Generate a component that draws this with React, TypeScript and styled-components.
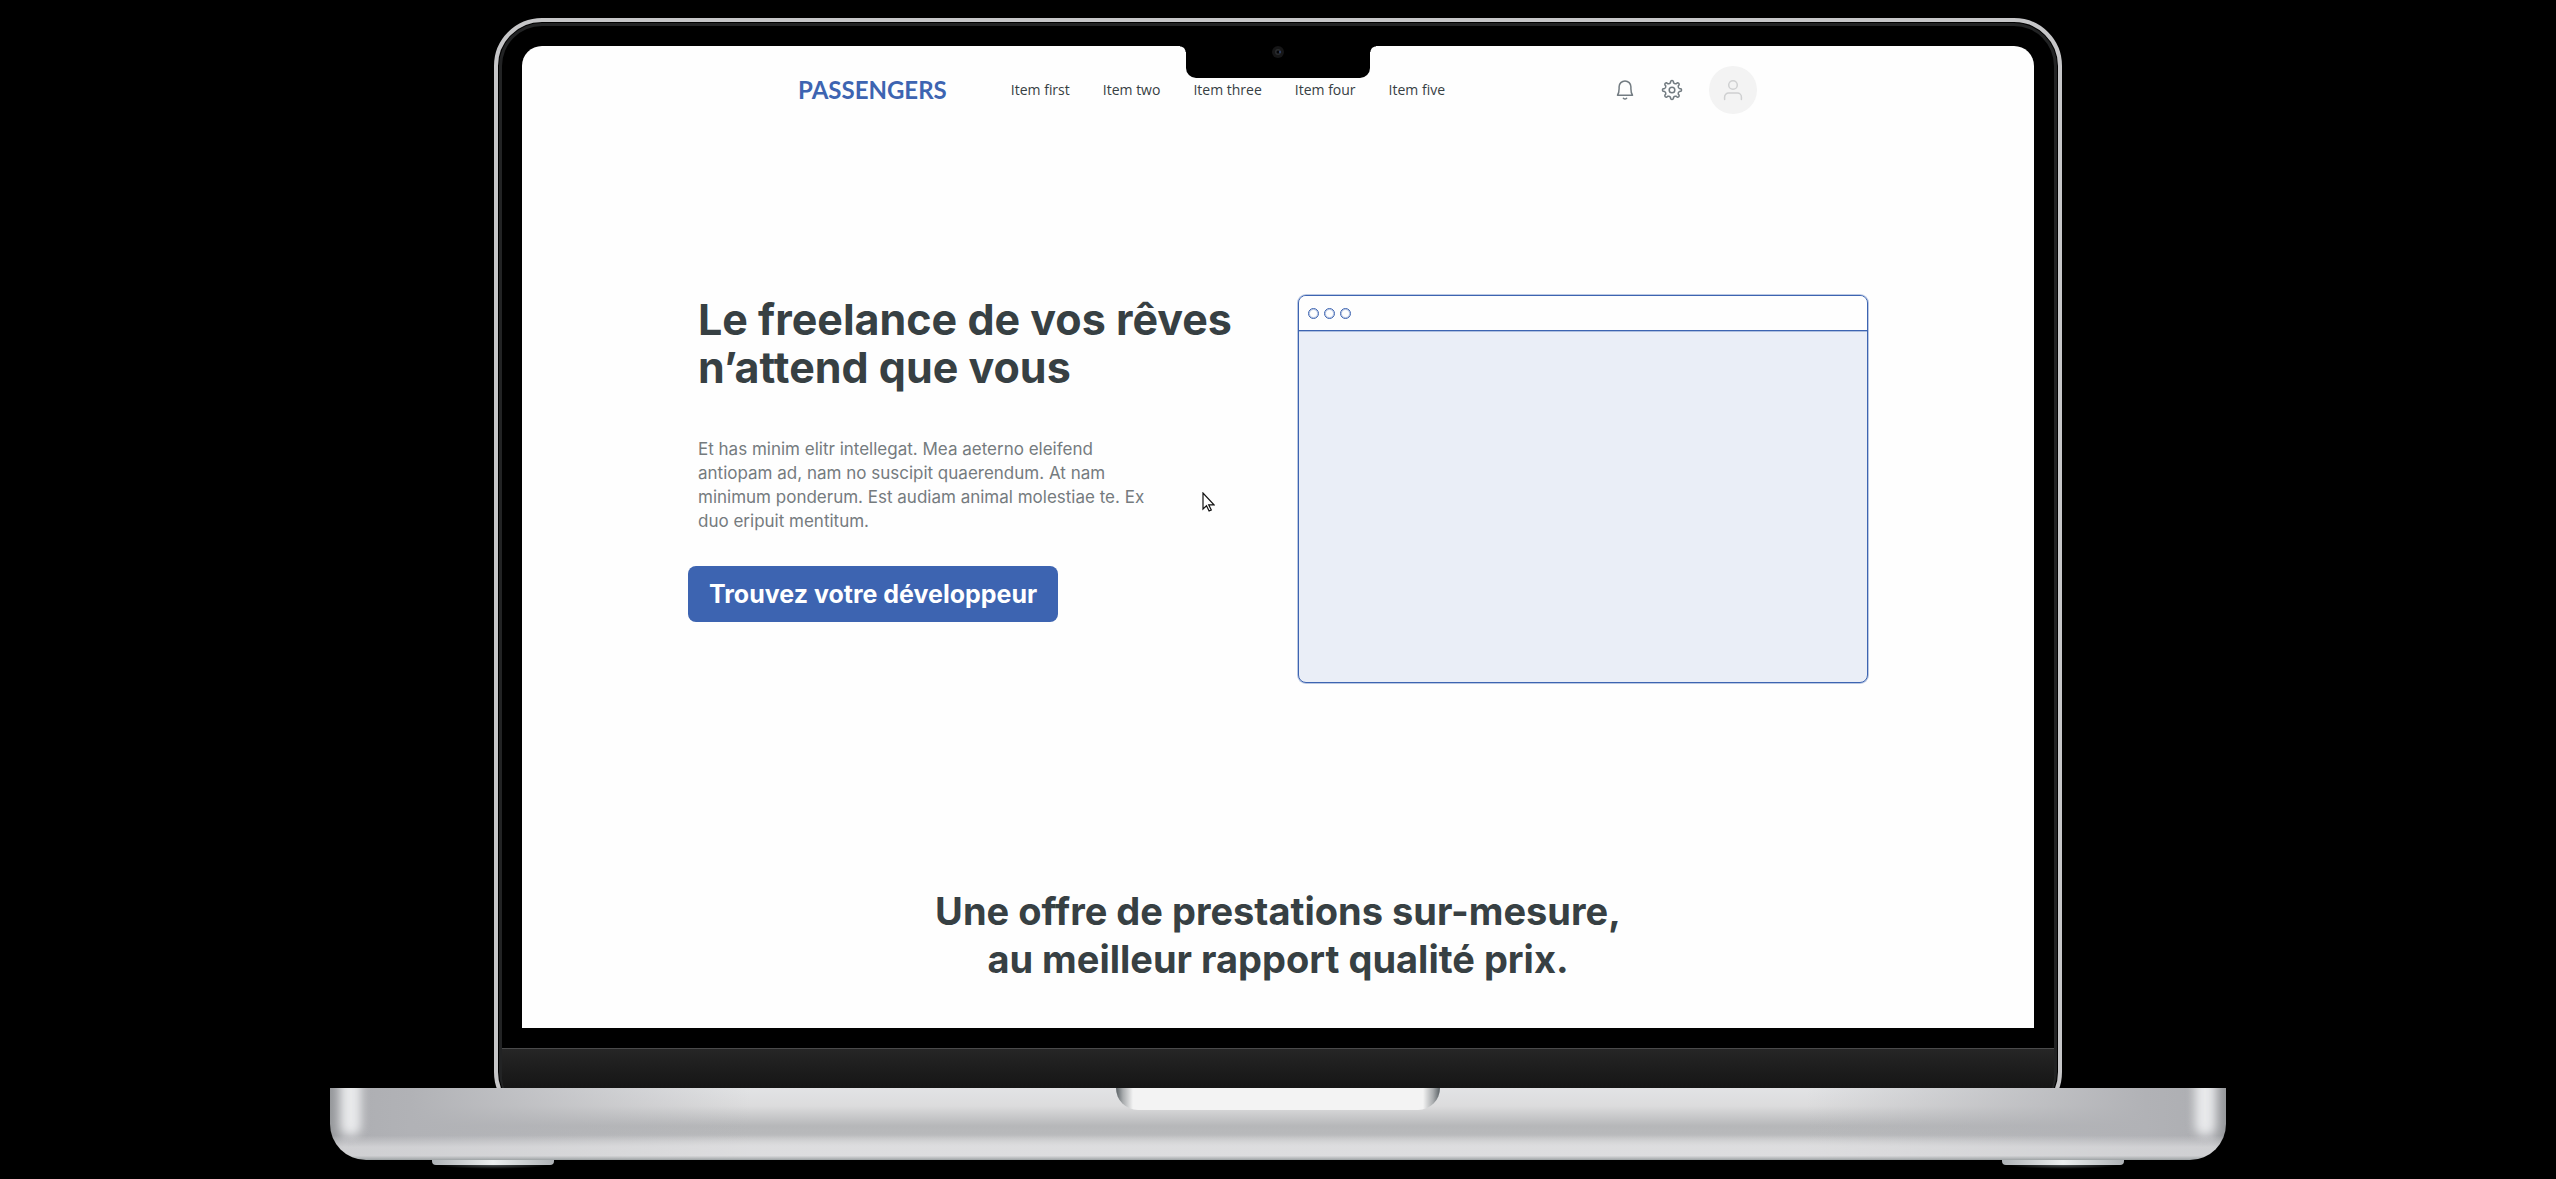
import React from "react";
import styled, { createGlobalStyle, css } from "styled-components";

const color = {
  brand: "#3d64b1",
  brandSoft: "rgba(61, 100, 177, 0.35)",
  brandTint: "#eaeef7",
  ink: "#374043",
  muted: "#757b7e",
  icon: "#727b81",
  page: "#fefefe",
};

const GlobalStyle = createGlobalStyle`
  *, *::before, *::after { box-sizing: border-box; }
  body {
    margin: 0;
    background: #000;
    color: ${color.ink};
    font-family: Inter, "Open Sans", sans-serif;
  }
`;

/* ---------- laptop ---------- */

const Stage = styled.div`
  min-height: 100vh;
  padding: 18px 330px 0;
  background: #000;
`;

const Lid = styled.div`
  margin: 0 164px;
  padding: 4px 4px 0;
  border: 4px solid #c6c6c8;
  border-radius: 48px;
  background: #000;
  box-shadow: inset 0 0 0 1px #000, inset 0 0 0 4px #222324;
`;

const Bezel = styled.div`
  padding: 20px;
`;

const Screen = styled.div`
  position: relative;
  border-radius: 20px 20px 0 0;
  background: ${color.page};
`;

const Notch = styled.div`
  position: absolute;
  top: 0;
  left: 50%;
  display: flex;
  justify-content: center;
  width: 184px;
  height: 32px;
  transform: translateX(-50%);
  border-radius: 0 0 10px 10px;
  background: #000;

  &::before,
  &::after {
    content: "";
    position: absolute;
    top: 0;
    width: 6px;
    height: 6px;
  }
  &::before {
    right: 100%;
    background: radial-gradient(circle at 0 100%, transparent 5px, #000 6px);
  }
  &::after {
    left: 100%;
    background: radial-gradient(circle at 100% 100%, transparent 5px, #000 6px);
  }
`;

const Chin = styled.div`
  height: 68px;
  border-top: 1px solid #4a4a4b;
  border-radius: 0 0 40px 40px;
  background: linear-gradient(#262626, #1d1d1d 20px, #151515 40px);
`;

const Base = styled.div`
  position: relative;
  display: flex;
  justify-content: center;
  height: 72px;
  margin-top: -32px;
  border-radius: 0 0 36px 36px;
  overflow: hidden;
  background:
    linear-gradient(
      transparent 66%,
      rgba(222, 222, 224, 0.7) 82%,
      rgba(222, 222, 224, 0.7) 94%,
      #9da2a4 100%
    ),
    linear-gradient(
      90deg,
      #96989b 0,
      #adaeb2 14px,
      #b1b2b6 80px,
      rgba(177, 178, 182, 0) 420px,
      rgba(177, 178, 182, 0) calc(100% - 420px),
      #b1b2b6 calc(100% - 80px),
      #adaeb2 calc(100% - 14px),
      #96989b 100%
    ),
    linear-gradient(
      #e2e3e5 0,
      #dcdcdd 18px,
      #b6b7b9 38px,
      #b8b9bb 46px,
      #dadadb 58px
    );

  &::before,
  &::after {
    content: "";
    position: absolute;
    top: -16px;
    width: 20px;
    height: 64px;
    border-radius: 10px;
    background: #e8e9eb;
    filter: blur(5px);
  }
  &::before {
    left: 11px;
  }
  &::after {
    right: 11px;
  }
`;

const ThumbScoop = styled.div`
  width: 324px;
  height: 22px;
  border-radius: 0 0 22px 22px;
  background: linear-gradient(
    90deg,
    #596064 0,
    #a9acae 7px,
    #f3f3f3 17px,
    #f3f3f3 calc(100% - 17px),
    #a9acae calc(100% - 7px),
    #596064 100%
  );
`;

const Feet = styled.div`
  display: flex;
  justify-content: space-between;
  padding: 0 102px;
`;

const Foot = styled.div`
  display: flex;
  flex-direction: column;
  align-items: center;
  width: 122px;

  &::before {
    content: "";
    width: 100%;
    height: 5px;
    border-radius: 0 0 4px 4px;
    background: linear-gradient(90deg, #aeb2b6, #eceeef 50%, #aeb2b6);
  }
  &::after {
    content: "";
    width: 90%;
    height: 4px;
    border-radius: 0 0 50% 50%;
    background: radial-gradient(ellipse at 50% 0, #4a4e50, #000 70%);
  }
`;

/* ---------- site header ---------- */

const Header = styled.header`
  display: flex;
  align-items: center;
  max-width: 960px;
  margin: 0 auto;
  padding: 20px 0;
`;

const Logo = styled.a`
  color: ${color.brand};
  font: 700 24px/32px Lato, sans-serif;
  text-decoration: none;
`;

const Nav = styled.nav`
  display: flex;
  gap: 33px;
  margin-left: 64px;
`;

const NavLink = styled.a`
  color: ${color.ink};
  font: 500 14px/20px "Open Sans", sans-serif;
  text-decoration: none;
`;

const Actions = styled.div`
  display: flex;
  align-items: center;
  gap: 23px;
  margin-left: auto;
  padding-right: 1px;
`;

const IconButton = styled.button<{ $round?: boolean }>`
  display: grid;
  place-items: center;
  width: 24px;
  height: 24px;
  padding: 0;
  border: 0;
  background: none;
  color: ${color.icon};
  cursor: pointer;

  ${(p) =>
    p.$round &&
    css`
      width: 48px;
      height: 48px;
      margin-left: 2px;
      border-radius: 50%;
      background: #f3f3f3;
      color: #cfd0d1;
    `}
`;

const Icon = styled.svg`
  width: 24px;
  height: 24px;
  fill: none;
  stroke: currentColor;
  stroke-width: 1.5;
  stroke-linecap: round;
  stroke-linejoin: round;
`;

/* ---------- hero ---------- */

const Hero = styled.section`
  display: grid;
  grid-template-columns: minmax(0, 1fr) minmax(0, 570px);
  max-width: 1180px;
  margin: 0 auto;
  padding: 161px 0 204px;
`;

const HeroCopy = styled.div`
  display: flex;
  flex-direction: column;
  align-items: flex-start;
`;

const HeroTitle = styled.h1`
  margin: 0;
  padding-left: 10px;
  font-size: 43px;
  font-weight: 700;
  line-height: 48px;
`;

const HeroText = styled.p`
  max-width: 480px;
  margin: 46px 0 33px;
  padding-left: 10px;
  color: ${color.muted};
  font-size: 17px;
  line-height: 24px;
`;

const CallToAction = styled.button`
  padding: 12px 21px;
  border: 0;
  border-radius: 8px;
  background: ${color.brand};
  color: #fff;
  font: 700 25px/32px Inter, sans-serif;
  cursor: pointer;
`;

const BrowserFrame = styled.div`
  display: flex;
  flex-direction: column;
  min-height: 388px;
  border: 1px solid ${color.brand};
  border-radius: 8px;
  overflow: hidden;
  background: ${color.brandTint};
  box-shadow: 0 0 0 1px ${color.brandSoft};
`;

const BrowserBar = styled.div`
  display: flex;
  align-items: center;
  gap: 5px;
  height: 35px;
  padding: 0 9px;
  border-bottom: 1px solid ${color.brand};
  background: ${color.page};
  box-shadow: 0 1px 0 ${color.brandSoft};
`;

const BrowserDot = styled.span`
  width: 11px;
  height: 11px;
  border: 1px solid ${color.brand};
  border-radius: 50%;
  box-shadow: inset 0 0 0 1px ${color.brandSoft};
`;

const Pointer = styled.svg`
  position: absolute;
  top: 446px;
  left: 45%;
  width: 13px;
  height: 20px;
`;

/* ---------- offer ---------- */

const Offer = styled.section`
  padding: 0 24px 45px;
  text-align: center;
`;

const OfferTitle = styled.h2`
  margin: 0;
  font-size: 38px;
  font-weight: 700;
  line-height: 48px;
`;

const NAV_ITEMS = ["Item first", "Item two", "Item three", "Item four", "Item five"];

const GEAR_TEETH = 8;

/* Closed outline that alternates between rounded tooth tips and valleys. */
function gearPath(): string {
  const at = (radius: number, angle: number) =>
    `${(12 + radius * Math.cos(angle)).toFixed(2)} ${(12 + radius * Math.sin(angle)).toFixed(2)}`;
  const step = (Math.PI * 2) / GEAR_TEETH;
  let d = "";
  for (let i = 0; i < GEAR_TEETH; i += 1) {
    const a = i * step - Math.PI / 2;
    d += `${i ? "L" : "M"}${at(7.4, a - step * 0.27)}`;
    d += `L${at(8.9, a - step * 0.19)}`;
    d += `Q${at(10.3, a)} ${at(8.9, a + step * 0.19)}`;
    d += `L${at(7.4, a + step * 0.27)}`;
    d += `Q${at(6.4, a + step * 0.5)} ${at(7.4, a + step * 0.73)}`;
  }
  return `${d}Z`;
}

function BellIcon() {
  return (
    <Icon viewBox="0 0 24 24" aria-hidden="true">
      <path d="M4.5 17.2h15c-1-1.4-1.6-3.6-1.6-6.4V8.8a5.9 5.9 0 0 0-11.8 0v2c0 2.8-.6 5-1.6 6.4z" />
      <path d="M10.4 20.2c.9.9 2.3.9 3.2 0" />
    </Icon>
  );
}

function GearIcon() {
  return (
    <Icon viewBox="0 0 24 24" aria-hidden="true">
      <path d={gearPath()} />
      <circle cx="12" cy="12" r="2.8" />
    </Icon>
  );
}

function PersonIcon() {
  return (
    <Icon viewBox="0 0 24 24" aria-hidden="true">
      <circle cx="12" cy="7" r="4.3" />
      <path d="M3.6 21.5V19a4 4 0 0 1 4-4h8.8a4 4 0 0 1 4 4v2.5" />
    </Icon>
  );
}

function Camera() {
  return (
    <svg width="12" height="12" viewBox="0 0 12 12" aria-hidden="true">
      <circle cx="6" cy="6" r="6" fill="#161617" />
      <circle cx="6" cy="6" r="3" fill="#2a2c2f" />
      <circle cx="6" cy="6" r="1.5" fill="#050507" />
      <circle cx="8" cy="6" r="1" fill="#2d4270" />
    </svg>
  );
}

export default function App() {
  return (
    <>
      <GlobalStyle />
      <Stage>
        <Lid>
          <Bezel>
            <Screen>
              <Notch>
                <Camera />
              </Notch>
              <Header>
                <Logo href="#">PASSENGERS</Logo>
                <Nav aria-label="Principal">
                  {NAV_ITEMS.map((item) => (
                    <NavLink key={item} href="#">
                      {item}
                    </NavLink>
                  ))}
                </Nav>
                <Actions>
                  <IconButton type="button" aria-label="Notifications">
                    <BellIcon />
                  </IconButton>
                  <IconButton type="button" aria-label="Paramètres">
                    <GearIcon />
                  </IconButton>
                  <IconButton type="button" aria-label="Profil" $round>
                    <PersonIcon />
                  </IconButton>
                </Actions>
              </Header>
              <main>
                <Hero>
                  <HeroCopy>
                    <HeroTitle>
                      Le freelance de vos rêves
                      <br />
                      n’attend que vous
                    </HeroTitle>
                    <HeroText>
                      Et has minim elitr intellegat. Mea aeterno eleifend
                      <br />
                      antiopam ad, nam no suscipit quaerendum. At nam
                      <br />
                      minimum ponderum. Est audiam animal molestiae te. Ex
                      <br />
                      duo eripuit mentitum.
                    </HeroText>
                    <CallToAction type="button">Trouvez votre développeur</CallToAction>
                  </HeroCopy>
                  <BrowserFrame>
                    <BrowserBar>
                      <BrowserDot />
                      <BrowserDot />
                      <BrowserDot />
                    </BrowserBar>
                  </BrowserFrame>
                </Hero>
                <Offer>
                  <OfferTitle>
                    Une offre de prestations sur-mesure,
                    <br />
                    au meilleur rapport qualité prix.
                  </OfferTitle>
                </Offer>
              </main>
              <Pointer viewBox="0 0 13 20" aria-hidden="true">
                <path
                  d="M1 1v16l3.5-3.3 2.6 5.3 2.2-1-2.6-5.2H12z"
                  fill="#fff"
                  stroke="#111"
                  strokeWidth="1.2"
                />
              </Pointer>
            </Screen>
          </Bezel>
          <Chin />
        </Lid>
        <Base>
          <ThumbScoop />
        </Base>
        <Feet>
          <Foot />
          <Foot />
        </Feet>
      </Stage>
    </>
  );
}
